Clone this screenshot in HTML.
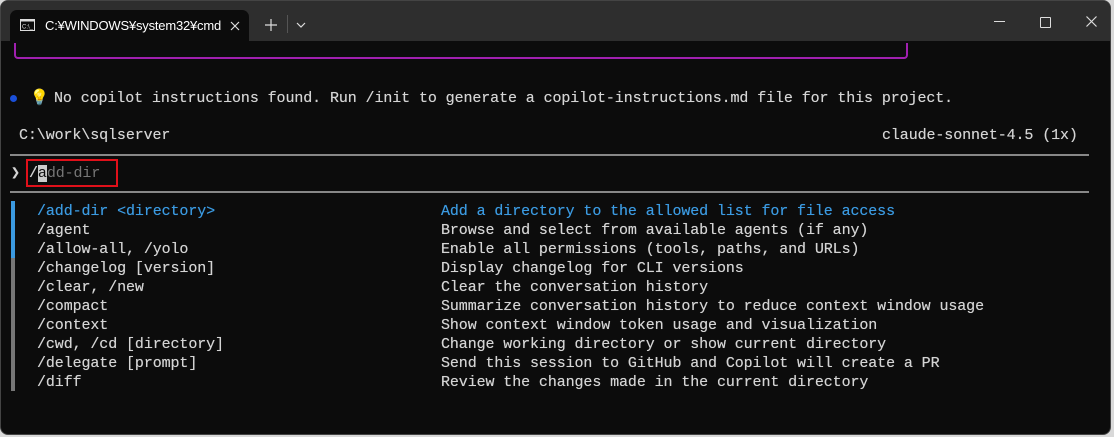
<!DOCTYPE html>
<html><head><style>
body{margin:0;width:1114px;height:437px;background:#d9d9d9;overflow:hidden;font-family:"Liberation Mono",monospace;}
.win{position:absolute;left:0;top:0;width:1111px;height:435px;background:#0c0c0c;border-radius:8px;overflow:hidden;border:1px solid #444;box-sizing:border-box}
.title{position:absolute;left:0;top:0;right:0;height:40px;background:#2e2e2e}
.tab{position:absolute;left:9px;top:9px;width:239px;height:32px;background:#0c0c0c;border-radius:7px 7px 0 0}
.tab span{position:absolute;left:35px;top:8px;font:13px "Liberation Sans",sans-serif;color:#fff;letter-spacing:-0.2px}
.t{position:absolute;font-size:15px;color:#d4d4d4;white-space:pre;line-height:19px;letter-spacing:-0.1px;text-shadow:0 0 0.4px #d4d4d4}
.b{color:#3b9ae1;text-shadow:0 0 0.4px #3b9ae1}
.hr{position:absolute;left:9px;width:1079px;height:2px;background:#888}
</style></head><body>
<div class="win">
<div class="title">
<div class="tab">
<svg style="position:absolute;left:10px;top:9px" width="15" height="12"><rect x="0.5" y="0.5" width="14" height="11" fill="none" stroke="#ddd"/><rect x="0.5" y="0.5" width="14" height="2" fill="#ddd"/><text x="2" y="9.5" font-size="6" fill="#ddd" font-family="Liberation Sans">C:\_</text></svg>
<span>C:¥WINDOWS¥system32¥cmd</span>
<svg style="position:absolute;left:220px;top:11px" width="10" height="10"><path d="M1 1L9 9M9 1L1 9" stroke="#ddd" stroke-width="1.2"/></svg>
</div>
<svg style="position:absolute;left:264px;top:18px" width="12" height="12"><path d="M6 0V12M0 6H12" stroke="#ddd" stroke-width="1.2"/></svg>
<div style="position:absolute;left:286px;top:14px;width:1px;height:18px;background:#555"></div>
<svg style="position:absolute;left:295px;top:21px" width="10" height="6"><path d="M1 1L5 5L9 1" stroke="#ddd" fill="none" stroke-width="1.2"/></svg>
<div style="position:absolute;left:993px;top:20px;width:11px;height:1px;background:#ddd"></div>
<div style="position:absolute;left:1039px;top:16px;width:9px;height:9px;border:1px solid #ddd;border-radius:1px"></div>
<svg style="position:absolute;left:1085px;top:15px" width="11" height="11"><path d="M0.5 0.5L10.5 10.5M10.5 0.5L0.5 10.5" stroke="#ddd" stroke-width="1.2"/></svg>
</div>
<div style="position:absolute;left:13px;top:42px;width:890px;height:14px;border:2px solid #a020b0;border-top:none;border-radius:0 0 4px 4px"></div>
<div style="position:absolute;left:9px;top:94px;width:7px;height:7px;border-radius:50%;background:#1a4fd8"></div>
<div class="t" style="left:29px;top:88px">💡</div>
<div class="t" style="left:53px;top:88px">No copilot instructions found. Run /init to generate a copilot-instructions.md file for this project.</div>
<div class="t" style="left:18px;top:125px">C:\work\sqlserver</div>
<div class="t" style="left:881px;top:125px">claude-sonnet-4.5 (1x)</div>
<div class="hr" style="top:153px"></div>
<div class="t" style="left:10px;top:163px;font-weight:bold">❯</div>
<div class="t" style="left:28px;top:163px">/<span style="background:#ccc;color:#0c0c0c">a</span><span style="color:#777;text-shadow:none">dd-dir</span></div>
<div style="position:absolute;left:25px;top:158px;width:88px;height:24px;border:2px solid #e0101a"></div>
<div class="hr" style="top:190px"></div>
<div style="position:absolute;left:10px;top:200px;width:4px;height:57px;background:#3b9ae1"></div>
<div style="position:absolute;left:10px;top:257px;width:4px;height:133px;background:#777"></div>
<div class="t" style="left:36px;top:201px"><span class="b">/add-dir &lt;directory&gt;</span>
/agent
/allow-all, /yolo
/changelog [version]
/clear, /new
/compact
/context
/cwd, /cd [directory]
/delegate [prompt]
/diff</div>
<div class="t" style="left:440px;top:201px"><span class="b">Add a directory to the allowed list for file access</span>
Browse and select from available agents (if any)
Enable all permissions (tools, paths, and URLs)
Display changelog for CLI versions
Clear the conversation history
Summarize conversation history to reduce context window usage
Show context window token usage and visualization
Change working directory or show current directory
Send this session to GitHub and Copilot will create a PR
Review the changes made in the current directory</div>
</div>
</body></html>
